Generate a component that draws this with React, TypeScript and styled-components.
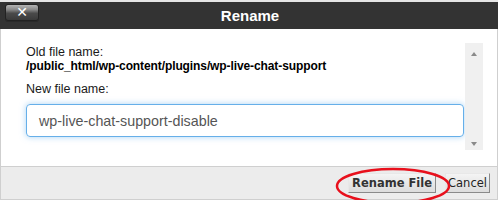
import React from "react";
import styled, { createGlobalStyle } from "styled-components";

const Global = createGlobalStyle`
  html, body { margin: 0; padding: 0; background: #fff; }
  body { font-family: "Liberation Sans", Arial, sans-serif; }
`;

const Dialog = styled.div`
  position: relative;
  width: 498px;
  height: 200px;
  box-sizing: border-box;
  border-top: 2px solid #e6e6e6;
  display: flex;
  flex-direction: column;
  overflow: hidden;
`;

const TitleBar = styled.div`
  height: 27px;
  background: #333333;
  display: grid;
  grid-template-columns: 1fr auto 1fr;
  align-items: center;
  padding: 0 5px;
`;

const CloseButton = styled.div`
  justify-self: start;
  margin-top: -7px;
  width: 34px;
  height: 17px;
  box-sizing: border-box;
  border: 1px solid #222;
  border-radius: 3px;
  background: linear-gradient(#b4b4b4 0%, #8a8a8a 30%, #4a4a4a 55%, #3a3a3a 100%);
  box-shadow: 0 1px 0 #2a2a2a;
  color: #fff;
  font: bold 14px "DejaVu Sans", sans-serif;
  display: flex;
  align-items: center;
  justify-content: center;
  line-height: 1;
`;

const Title = styled.div`
  color: #fff;
  font: bold 15px "Liberation Sans", Arial, sans-serif;
  margin-left: 2px;
`;

const Body = styled.div`
  flex: 1;
  background: #fff;
  border-left: 1px solid #cfcfcf;
  border-right: 1px solid #cfcfcf;
  padding: 14px 14px 16px 25px;
  display: flex;
`;

const Content = styled.div`
  flex: 1;
  padding-top: 2px;
  display: flex;
  flex-direction: column;
`;

const Label = styled.div<{ $bold?: boolean; $gap?: number }>`
  font-size: ${(p) => (p.$bold ? "12px" : "12.5px")};
  line-height: 14px;
  color: ${(p) => (p.$bold ? "#000" : "#1a1a1a")};
  font-weight: ${(p) => (p.$bold ? "bold" : "normal")};
  letter-spacing: ${(p) => (p.$bold ? "-0.1px" : "0")};
  margin-top: ${(p) => p.$gap ?? 0}px;
  white-space: nowrap;
`;

const Input = styled.div`
  margin-top: 8px;
  margin-right: 1px;
  height: 33px;
  box-sizing: border-box;
  border: 1px solid #66afe9;
  border-radius: 4px;
  box-shadow: 0 0 6px rgba(102, 175, 233, 0.55);
  padding: 0 12px;
  display: flex;
  align-items: center;
  font-size: 14.3px;
  color: #555;
`;

const Scrollbar = styled.div`
  width: 18px;
  background: #f0f0f0;
  display: flex;
  flex-direction: column;
  justify-content: space-between;
  align-items: center;
  padding: 9px 0 4px;
`;

const Arrow = styled.div<{ $down?: boolean }>`
  width: 0;
  height: 0;
  border-left: 3.5px solid transparent;
  border-right: 3.5px solid transparent;
  ${(p) =>
    p.$down
      ? "border-top: 4px solid #8a8a8a;"
      : "border-bottom: 4px solid #8a8a8a;"}
`;

const Footer = styled.div`
  height: 34px;
  box-sizing: border-box;
  background: #ececec;
  border: 1px solid #cfcfcf;
  display: flex;
  justify-content: flex-end;
  align-items: flex-start;
  gap: 9px;
  padding: 6px 7px 0 0;
`;

const Button = styled.div<{ $primary?: boolean }>`
  height: 20px;
  box-sizing: border-box;
  padding: 0 ${(p) => (p.$primary ? "3px" : "2px")};
  background: linear-gradient(#f4f4f4, #dcdcdc);
  border: 1px solid;
  border-color: #e8e8e8 #8a8a8a #8a8a8a #e8e8e8;
  display: flex;
  align-items: center;
  font-family: "DejaVu Sans", Verdana, sans-serif;
  font-size: 11.5px;
  font-weight: ${(p) => (p.$primary ? "bold" : "normal")};
  color: ${(p) => (p.$primary ? "#333" : "#222")};
`;

const Highlight = styled.svg`
  position: absolute;
  left: 334px;
  top: 164px;
  pointer-events: none;
`;

export default function App() {
  return (
    <>
      <Global />
      <Dialog>
        <TitleBar>
          <CloseButton>✕</CloseButton>
          <Title>Rename</Title>
          <span />
        </TitleBar>
        <Body>
          <Content>
            <Label>Old file name:</Label>
            <Label $bold>/public_html/wp-content/plugins/wp-live-chat-support</Label>
            <Label $gap={9}>New file name:</Label>
            <Input>wp-live-chat-support-disable</Input>
          </Content>
          <Scrollbar>
            <Arrow />
            <Arrow $down />
          </Scrollbar>
        </Body>
        <Footer>
          <Button $primary>Rename File</Button>
          <Button>Cancel</Button>
        </Footer>
        <Highlight width="120" height="40" viewBox="0 0 120 40">
          <ellipse cx="59" cy="20" rx="56" ry="17" fill="none" stroke="#e8101c" strokeWidth="2.5" />
        </Highlight>
      </Dialog>
    </>
  );
}
